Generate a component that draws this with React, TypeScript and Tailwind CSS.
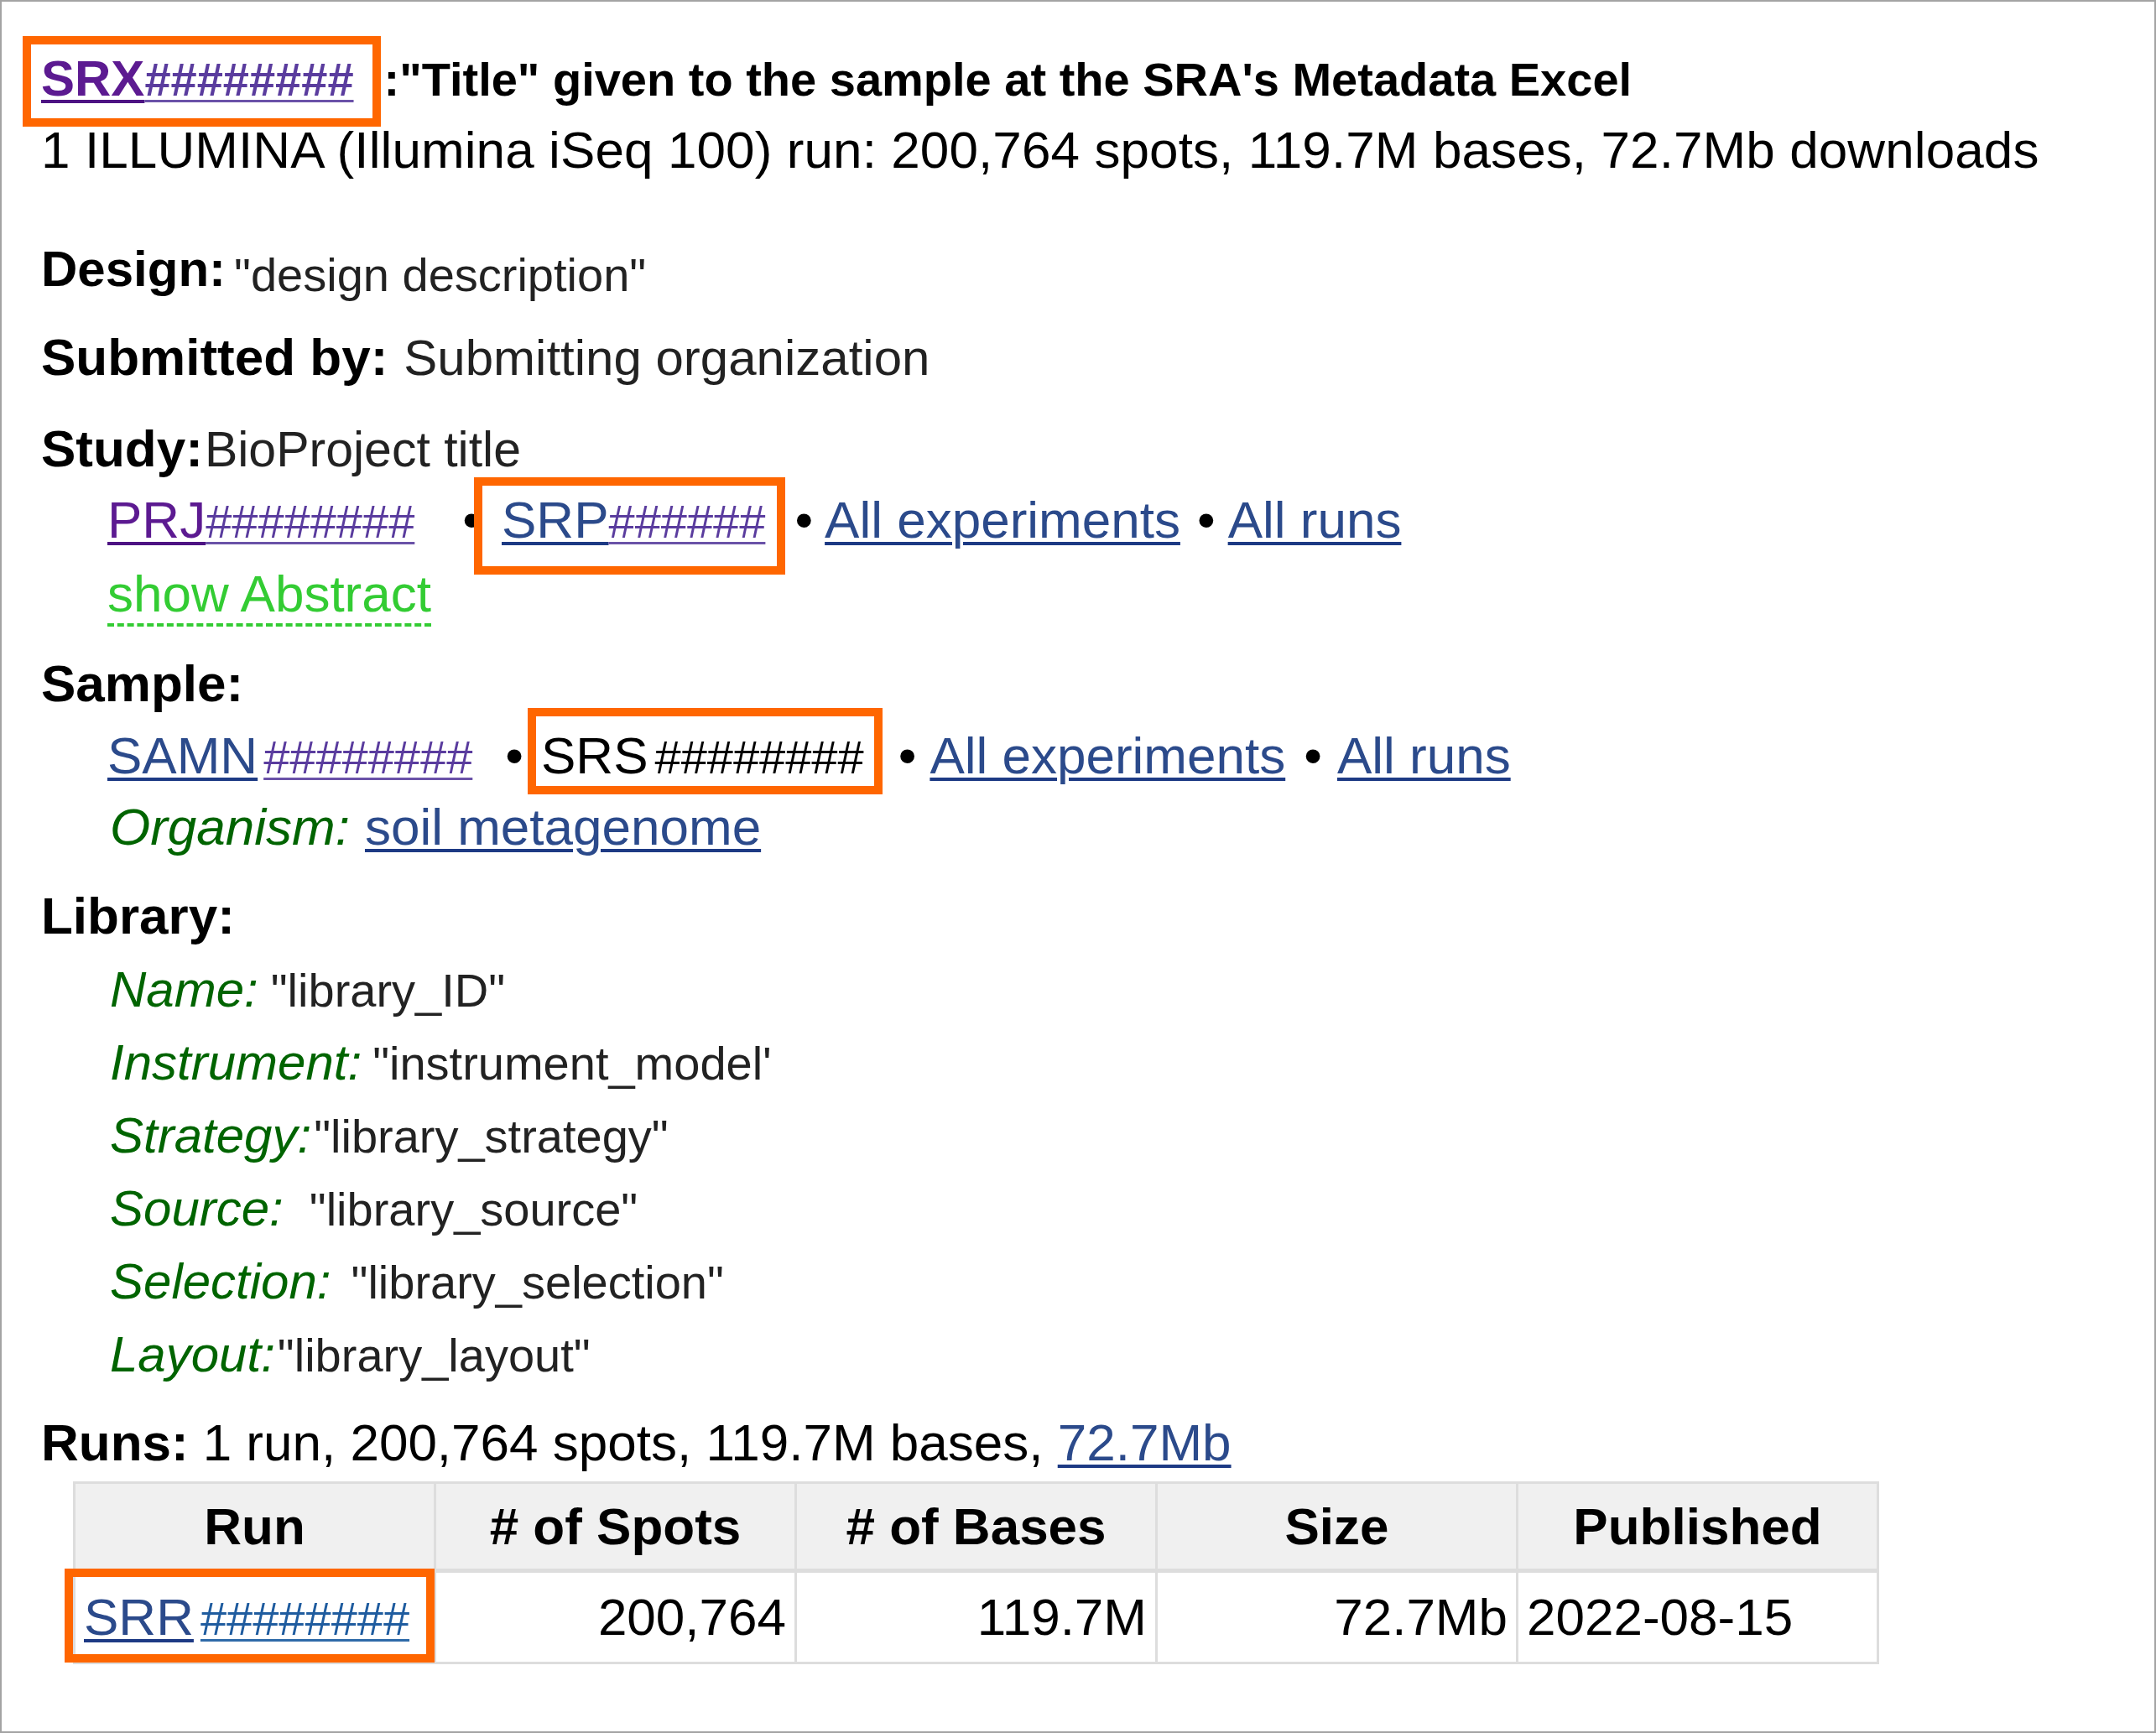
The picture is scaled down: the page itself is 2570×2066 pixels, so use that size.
// SRA experiment record (annotated screenshot)
// Liberation Sans stands in for Arial; orange boxes are annotation overlays

const FONT = "font-['Liberation_Sans',Arial,Helvetica,sans-serif]"

function Box({ className }: { className: string }) {
  return <span className={`pointer-events-none absolute border-[10px] border-[#ff6600] ${className}`} />
}

const library = [
  { label: 'Name:', value: '"library_ID"', gap: 'ml-[15px]' },
  { label: 'Instrument:', value: '"instrument_model\'', gap: 'ml-[13px]' },
  { label: 'Strategy:', value: '"library_strategy"', gap: 'ml-[3px]' },
  { label: 'Source:', value: '"library_source"', gap: 'ml-[31px]' },
  { label: 'Selection:', value: '"library_selection"', gap: 'ml-[24px]' },
  { label: 'Layout:', value: '"library_layout"', gap: 'ml-[3px]' },
]

const runs = [
  { run: 'SRR', id: '########', spots: '200,764', bases: '119.7M', size: '72.7Mb', published: '2022-08-15' },
]

export default function App() {
  return (
    <div className={`${FONT} h-[2066px] w-[2570px] border-2 border-[#a3a3a3] bg-white pl-[47px] pt-[62px] text-black`}>

      {/* ── Title ─────────────────────────────────────────── */}
      <div className="h-[60px] whitespace-nowrap text-[60px] font-bold leading-none">
        <span className="relative inline-block">
          <a className="text-[#5c1a91] underline decoration-[#4d1383] decoration-[4px] underline-offset-[5px]">SRX</a>
          <a className="text-[56px] text-[#5a3c9e] underline decoration-[#6a52a8] decoration-[3px] underline-offset-[5px]">########</a>
          <Box className="-top-[21px] -right-[32px] -bottom-[27px] -left-[22px]" />
        </span>
        <span className="ml-[36px] text-[56px]">:"Title" given to the sample at the SRA's Metadata Excel</span>
      </div>

      <div className="mt-[24px] h-[62px] whitespace-nowrap text-[62px] leading-none tracking-[0.1px]">
        1 ILLUMINA (Illumina iSeq 100) run: 200,764 spots, 119.7M bases, 72.7Mb downloads
      </div>

      {/* ── Design / submitter ─────────────────────────────── */}
      <div className="mt-[81px] h-[60px] whitespace-nowrap text-[60px] leading-none">
        <span className="font-bold">Design:</span>
        <span className="ml-[10px] align-[-6px] text-[56px] text-[#222]">"design description"</span>
      </div>

      <div className="mt-[44px] h-[62px] whitespace-nowrap text-[62px] leading-none">
        <span className="font-bold">Submitted by:</span>
        <span className="ml-[19px] text-[60px] text-[#222]">Submitting organization</span>
      </div>

      {/* ── Study ──────────────────────────────────────────── */}
      <div className="mt-[47px] h-[62px] whitespace-nowrap text-[62px] leading-none">
        <span className="font-bold">Study:</span>
        <span className="ml-[2px] text-[59px] text-[#222]">BioProject title</span>
      </div>

      <div className="mt-[23px] h-[62px] whitespace-nowrap pl-[79px] text-[62px] leading-none">
        <a className="text-[#5c1a91] underline decoration-[#4d1383] decoration-[4px] underline-offset-[5px]">PRJ</a>
        <a className="text-[56px] text-[#5a3c9e] underline decoration-[#6a52a8] decoration-[3px] underline-offset-[5px]">########</a>
        <span className="ml-[57px]">•</span>
        <span className="relative ml-[25px] inline-block">
          <a className="text-[#2b4a8b] underline decoration-[#1d3a84] decoration-[4px] underline-offset-[5px]">SRP</a>
          <a className="text-[56px] text-[#5a3c9e] underline decoration-[#6a52a8] decoration-[3px] underline-offset-[5px]">######</a>
          <Box className="-top-[20px] -right-[24px] -bottom-[34px] -left-[33px]" />
        </span>
        <span className="ml-[35px]">•</span>
        <a className="ml-[14px] text-[#2b4a8b] underline decoration-[#1d3a84] decoration-[4px] underline-offset-[5px]">All experiments</a>
        <span className="ml-[20px]">•</span>
        <a className="ml-[15px] text-[#2b4a8b] underline decoration-[#1d3a84] decoration-[4px] underline-offset-[5px]">All runs</a>
      </div>

      <div className="mt-[26px] h-[62px] whitespace-nowrap pl-[79px] text-[62px] leading-none">
        <a className="inline-block border-b-[4px] border-dashed border-[#33cc33] pb-[4px] text-[#33cc33]">show Abstract</a>
      </div>

      {/* ── Sample ─────────────────────────────────────────── */}
      <div className="mt-[45px] h-[62px] whitespace-nowrap text-[62px] font-bold leading-none">Sample:</div>

      <div className="mt-[24px] h-[62px] whitespace-nowrap pl-[79px] text-[62px] leading-none">
        <a className="text-[#2b4a8b] underline decoration-[#1d3a84] decoration-[4px] underline-offset-[5px]">SAMN</a>
        <a className="ml-[7px] text-[56px] text-[#5a3c9e] underline decoration-[#6a52a8] decoration-[3px] underline-offset-[5px]">########</a>
        <span className="ml-[39px]">•</span>
        <span className="relative ml-[21px] inline-block">
          <span>SRS</span>
          <span className="ml-[8px] text-[56px]">########</span>
          <Box className="-top-[26px] -right-[22px] -bottom-[15px] -left-[16px]" />
        </span>
        <span className="ml-[41px]">•</span>
        <a className="ml-[16px] text-[#2b4a8b] underline decoration-[#1d3a84] decoration-[4px] underline-offset-[5px]">All experiments</a>
        <span className="ml-[22px]">•</span>
        <a className="ml-[18px] text-[#2b4a8b] underline decoration-[#1d3a84] decoration-[4px] underline-offset-[5px]">All runs</a>
      </div>

      <div className="mt-[23px] h-[62px] whitespace-nowrap pl-[82px] text-[62px] leading-none">
        <span className="italic text-[#006400]">Organism:</span>
        <a className="ml-[18px] text-[#2b4a8b] underline decoration-[#1d3a84] decoration-[4px] underline-offset-[5px]">soil metagenome</a>
      </div>

      {/* ── Library ────────────────────────────────────────── */}
      <div className="mt-[44px] h-[62px] whitespace-nowrap text-[62px] font-bold leading-none">Library:</div>

      <div className="mt-[13px] pl-[82px]">
        {library.map((row) => (
          <div key={row.label} className="h-[87px] whitespace-nowrap text-[60px] leading-[87px]">
            <span className="italic text-[#006400]">{row.label}</span>
            <span className={`${row.gap} text-[56px] text-[#222]`}>{row.value}</span>
          </div>
        ))}
      </div>

      {/* ── Runs ───────────────────────────────────────────── */}
      <div className="mt-[31px] h-[62px] whitespace-nowrap text-[62px] leading-none">
        <span className="font-bold">Runs:</span>
        <span className="ml-[17px]">1 run, 200,764 spots, 119.7M bases, </span>
        <a className="text-[#2b4a8b] underline decoration-[#1d3a84] decoration-[4px] underline-offset-[5px]">72.7Mb</a>
      </div>

      <table className="ml-[38px] mt-[15px] w-[2150px] table-fixed border-collapse text-[62px] leading-none">
        <thead>
          <tr className="bg-[#f0f0f0]">
            {['Run', '# of Spots', '# of Bases', 'Size', 'Published'].map((h) => (
              <th key={h} className="h-[105px] w-[430px] border-[3px] border-b-[5px] border-[#dddddd] text-center align-middle font-bold">
                {h}
              </th>
            ))}
          </tr>
        </thead>
        <tbody>
          {runs.map((r) => (
            <tr key={r.run}>
              <td className="relative h-[110px] border-[3px] border-[#dddddd] px-[10px] text-left align-middle">
                <a className="text-[#2b4a8b] underline decoration-[#1d3a84] decoration-[4px] underline-offset-[5px]">{r.run}</a>
                <a className="ml-[8px] text-[56px] text-[#1f5c9f] underline decoration-[#2e6aa8] decoration-[3px] underline-offset-[5px]">{r.id}</a>
                <Box className="-top-[5px] -right-[1px] -bottom-[1px] -left-[13px]" />
              </td>
              <td className="border-[3px] border-[#dddddd] px-[10px] text-right align-middle">{r.spots}</td>
              <td className="border-[3px] border-[#dddddd] px-[10px] text-right align-middle">{r.bases}</td>
              <td className="border-[3px] border-[#dddddd] px-[10px] text-right align-middle">{r.size}</td>
              <td className="border-[3px] border-[#dddddd] px-[10px] text-left align-middle">{r.published}</td>
            </tr>
          ))}
        </tbody>
      </table>
    </div>
  )
}
